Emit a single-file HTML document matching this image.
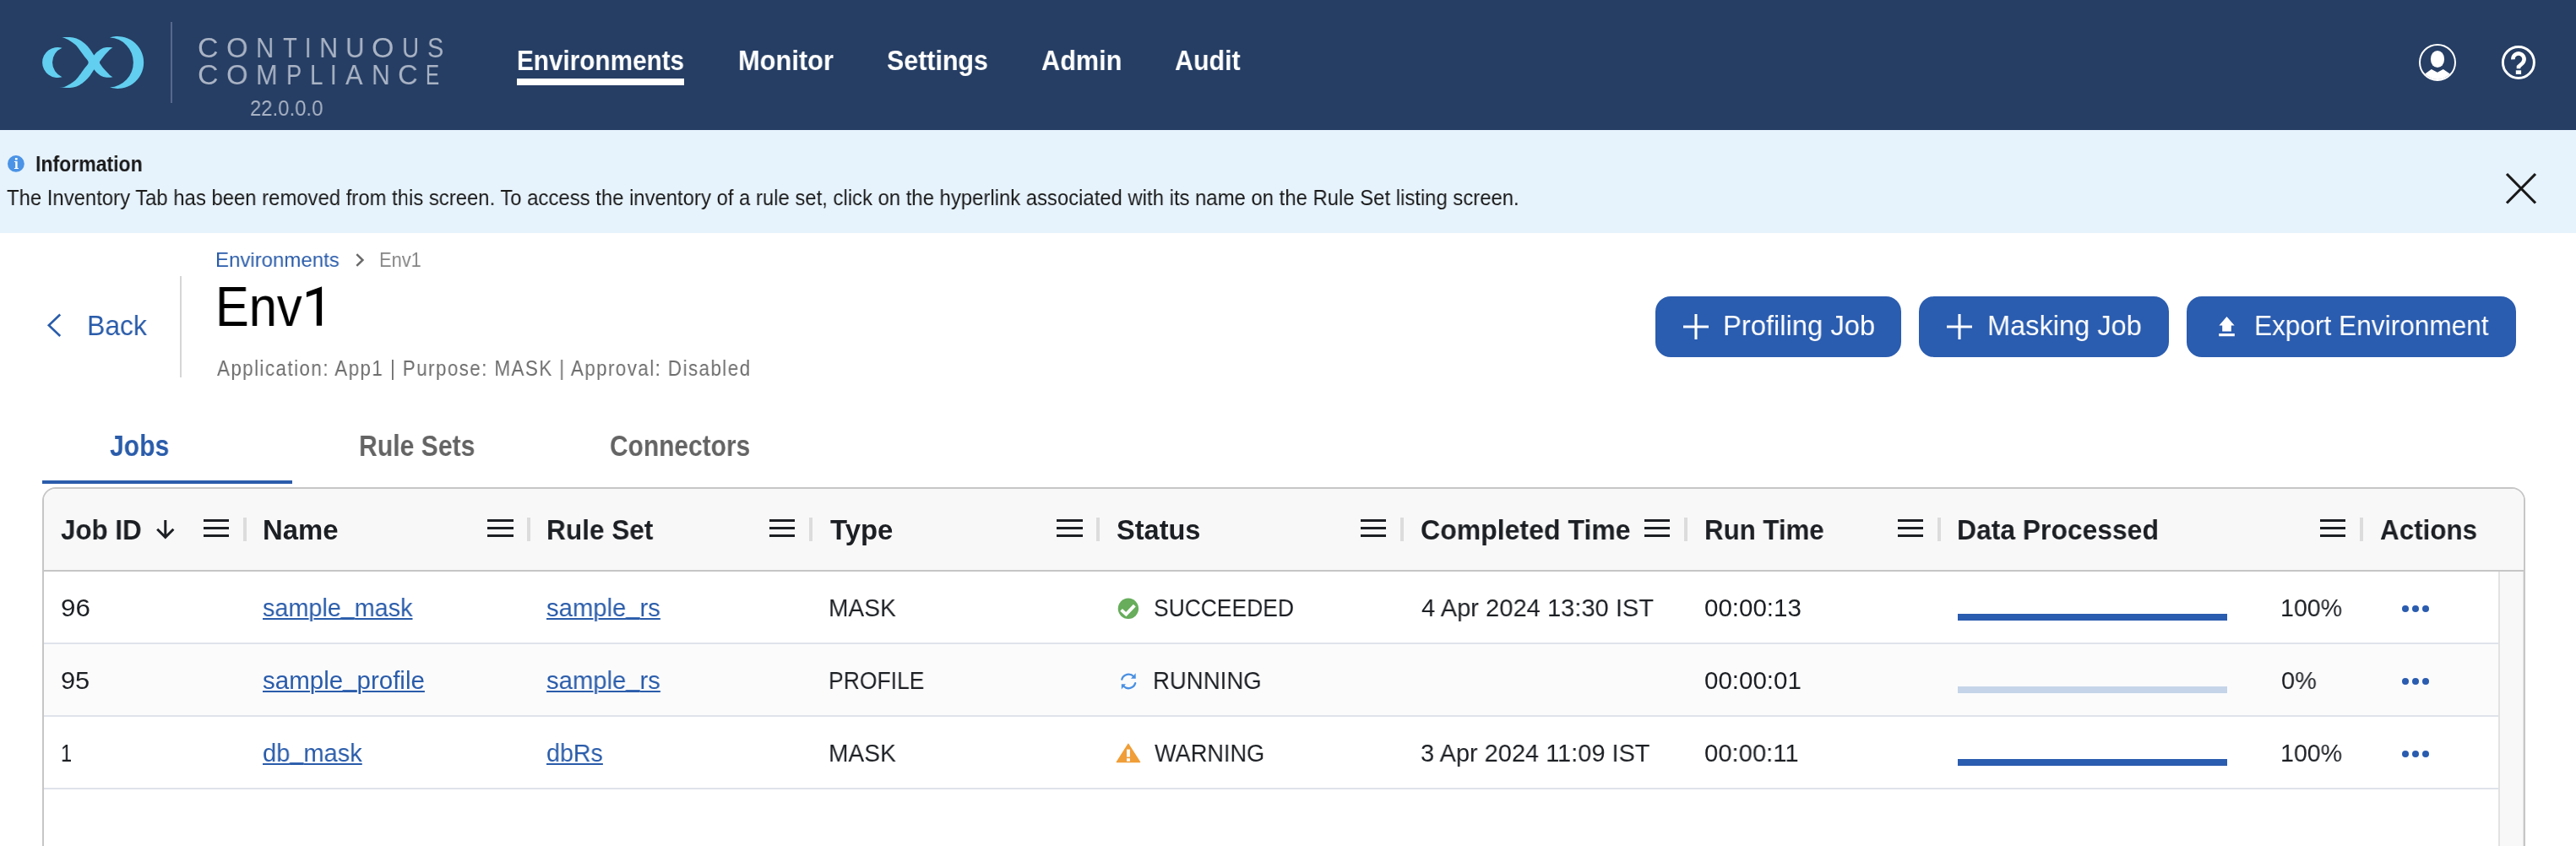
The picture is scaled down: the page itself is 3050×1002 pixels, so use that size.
<!DOCTYPE html>
<html><head><meta charset="utf-8"><title>Env1</title>
<style>
html,body{margin:0;padding:0;width:3050px;height:1002px;overflow:hidden;background:#fff}
body{position:relative;font-family:"Liberation Sans",sans-serif}
.r{position:absolute;box-sizing:border-box}
.t{position:absolute;white-space:pre;transform-origin:0 0;will-change:transform}
svg{position:absolute;left:0;top:0}
</style></head><body>
<div class="r" style="left:0.00px;top:0.00px;width:3050.00px;height:154.00px;background:#263e64;"></div>
<div class="r" style="left:202.00px;top:26.00px;width:2.00px;height:96.00px;background:#56688a;"></div>
<div class="r" style="left:612.00px;top:93.00px;width:198.00px;height:8.00px;background:#ffffff;"></div>
<div class="r" style="left:0.00px;top:154.00px;width:3050.00px;height:122.00px;background:#e6f2fc;"></div>
<div class="r" style="left:213.00px;top:327.00px;width:2.00px;height:120.00px;background:#d6d6d6;"></div>
<div class="r" style="left:1960.00px;top:351.00px;width:291.00px;height:72.00px;background:#2a5caf;border-radius:18px"></div>
<div class="r" style="left:2272.00px;top:351.00px;width:296.00px;height:72.00px;background:#2a5caf;border-radius:18px"></div>
<div class="r" style="left:2589.00px;top:351.00px;width:390.00px;height:72.00px;background:#2a5caf;border-radius:18px"></div>
<div class="r" style="left:50.00px;top:569.00px;width:296.00px;height:4.00px;background:#2a5caa;"></div>
<div class="r" style="left:50px;top:577px;width:2940px;height:600px;border:2px solid #c6c6c6;border-radius:16px;background:#fff"></div>
<div class="r" style="left:52px;top:579px;width:2936px;height:96px;background:#f8f8f8;border-radius:14px 14px 0 0"></div>
<div class="r" style="left:52.00px;top:675.00px;width:2936.00px;height:2.00px;background:#c6c6c6;"></div>
<div class="r" style="left:52.00px;top:763.00px;width:2906.00px;height:84.00px;background:#fbfbfc;"></div>
<div class="r" style="left:52.00px;top:761.00px;width:2906.00px;height:2.00px;background:#dfe3ea;"></div>
<div class="r" style="left:52.00px;top:847.00px;width:2906.00px;height:2.00px;background:#dfe3ea;"></div>
<div class="r" style="left:52.00px;top:933.00px;width:2906.00px;height:2.00px;background:#dfe3ea;"></div>
<div class="r" style="left:2958.00px;top:677.00px;width:30.00px;height:325.00px;background:#f8f8f8;"></div>
<div class="r" style="left:2958.00px;top:677.00px;width:2.00px;height:325.00px;background:#e2e2e2;"></div>
<div class="r" style="left:2986.50px;top:677.00px;width:1.50px;height:325.00px;background:#e4e4e4;"></div>
<div class="r" style="left:240.70px;top:615.00px;width:30.50px;height:3.00px;background:#1c1f23;"></div>
<div class="r" style="left:240.70px;top:624.00px;width:30.50px;height:3.00px;background:#1c1f23;"></div>
<div class="r" style="left:240.70px;top:633.00px;width:30.50px;height:3.00px;background:#1c1f23;"></div>
<div class="r" style="left:288.00px;top:613.00px;width:4.00px;height:28.00px;background:#dcdcdc;"></div>
<div class="r" style="left:577.20px;top:615.00px;width:30.50px;height:3.00px;background:#1c1f23;"></div>
<div class="r" style="left:577.20px;top:624.00px;width:30.50px;height:3.00px;background:#1c1f23;"></div>
<div class="r" style="left:577.20px;top:633.00px;width:30.50px;height:3.00px;background:#1c1f23;"></div>
<div class="r" style="left:624.00px;top:613.00px;width:4.00px;height:28.00px;background:#dcdcdc;"></div>
<div class="r" style="left:910.90px;top:615.00px;width:30.50px;height:3.00px;background:#1c1f23;"></div>
<div class="r" style="left:910.90px;top:624.00px;width:30.50px;height:3.00px;background:#1c1f23;"></div>
<div class="r" style="left:910.90px;top:633.00px;width:30.50px;height:3.00px;background:#1c1f23;"></div>
<div class="r" style="left:957.60px;top:613.00px;width:4.00px;height:28.00px;background:#dcdcdc;"></div>
<div class="r" style="left:1251.00px;top:615.00px;width:30.50px;height:3.00px;background:#1c1f23;"></div>
<div class="r" style="left:1251.00px;top:624.00px;width:30.50px;height:3.00px;background:#1c1f23;"></div>
<div class="r" style="left:1251.00px;top:633.00px;width:30.50px;height:3.00px;background:#1c1f23;"></div>
<div class="r" style="left:1298.00px;top:613.00px;width:4.00px;height:28.00px;background:#dcdcdc;"></div>
<div class="r" style="left:1610.70px;top:615.00px;width:30.50px;height:3.00px;background:#1c1f23;"></div>
<div class="r" style="left:1610.70px;top:624.00px;width:30.50px;height:3.00px;background:#1c1f23;"></div>
<div class="r" style="left:1610.70px;top:633.00px;width:30.50px;height:3.00px;background:#1c1f23;"></div>
<div class="r" style="left:1658.00px;top:613.00px;width:4.00px;height:28.00px;background:#dcdcdc;"></div>
<div class="r" style="left:1946.70px;top:615.00px;width:30.50px;height:3.00px;background:#1c1f23;"></div>
<div class="r" style="left:1946.70px;top:624.00px;width:30.50px;height:3.00px;background:#1c1f23;"></div>
<div class="r" style="left:1946.70px;top:633.00px;width:30.50px;height:3.00px;background:#1c1f23;"></div>
<div class="r" style="left:1994.00px;top:613.00px;width:4.00px;height:28.00px;background:#dcdcdc;"></div>
<div class="r" style="left:2246.90px;top:615.00px;width:30.50px;height:3.00px;background:#1c1f23;"></div>
<div class="r" style="left:2246.90px;top:624.00px;width:30.50px;height:3.00px;background:#1c1f23;"></div>
<div class="r" style="left:2246.90px;top:633.00px;width:30.50px;height:3.00px;background:#1c1f23;"></div>
<div class="r" style="left:2294.00px;top:613.00px;width:4.00px;height:28.00px;background:#dcdcdc;"></div>
<div class="r" style="left:2746.90px;top:615.00px;width:30.50px;height:3.00px;background:#1c1f23;"></div>
<div class="r" style="left:2746.90px;top:624.00px;width:30.50px;height:3.00px;background:#1c1f23;"></div>
<div class="r" style="left:2746.90px;top:633.00px;width:30.50px;height:3.00px;background:#1c1f23;"></div>
<div class="r" style="left:2794.00px;top:613.00px;width:4.00px;height:28.00px;background:#dcdcdc;"></div>
<div class="r" style="left:2318.00px;top:727.00px;width:319.00px;height:8.00px;background:#2a5caf;"></div>
<div class="r" style="left:2318.00px;top:813.00px;width:319.00px;height:8.00px;background:#c5d4e8;"></div>
<div class="r" style="left:2318.00px;top:899.00px;width:319.00px;height:8.00px;background:#2a5caf;"></div>
<div class="r" style="left:2843.8px;top:716.8px;width:8.4px;height:8.4px;border-radius:50%;background:#2a5caf"></div>
<div class="r" style="left:2855.8px;top:716.8px;width:8.4px;height:8.4px;border-radius:50%;background:#2a5caf"></div>
<div class="r" style="left:2867.8px;top:716.8px;width:8.4px;height:8.4px;border-radius:50%;background:#2a5caf"></div>
<div class="r" style="left:2843.8px;top:802.8px;width:8.4px;height:8.4px;border-radius:50%;background:#2a5caf"></div>
<div class="r" style="left:2855.8px;top:802.8px;width:8.4px;height:8.4px;border-radius:50%;background:#2a5caf"></div>
<div class="r" style="left:2867.8px;top:802.8px;width:8.4px;height:8.4px;border-radius:50%;background:#2a5caf"></div>
<div class="r" style="left:2843.8px;top:888.8px;width:8.4px;height:8.4px;border-radius:50%;background:#2a5caf"></div>
<div class="r" style="left:2855.8px;top:888.8px;width:8.4px;height:8.4px;border-radius:50%;background:#2a5caf"></div>
<div class="r" style="left:2867.8px;top:888.8px;width:8.4px;height:8.4px;border-radius:50%;background:#2a5caf"></div>
<svg width="3050" height="1002" viewBox="0 0 3050 1002"><path d="M69.0 44.3 C70.58 44.25 75.57 43.97 78.50 44.00 C81.43 44.03 83.98 43.97 86.60 44.50 C89.22 45.03 91.82 45.93 94.20 47.20 C96.58 48.47 98.88 50.30 100.90 52.10 C102.92 53.90 104.55 55.75 106.30 58.00 C108.05 60.25 110.55 64.33 111.40 65.60 C111.98 64.93 113.48 62.88 114.90 61.60 C116.32 60.32 118.25 58.78 119.90 57.90 C121.55 57.02 123.15 56.60 124.80 56.30 C126.45 56.00 128.33 56.05 129.80 56.10 C131.27 56.15 132.97 56.52 133.60 56.60 C133.07 56.93 131.58 57.60 130.40 58.60 C129.22 59.60 127.70 61.33 126.50 62.60 C125.30 63.87 124.30 64.88 123.20 66.20 C122.10 67.52 120.78 69.21 119.90 70.50 C119.02 71.79 117.90 72.80 117.90 73.95 C117.90 75.10 119.02 76.11 119.90 77.40 C120.78 78.69 122.10 80.38 123.20 81.70 C124.30 83.02 125.30 84.03 126.50 85.30 C127.70 86.57 129.22 88.30 130.40 89.30 C131.58 90.30 133.07 90.97 133.60 91.30 C132.97 91.38 131.27 91.75 129.80 91.80 C128.33 91.85 126.45 91.90 124.80 91.60 C123.15 91.30 121.55 90.88 119.90 90.00 C118.25 89.12 116.32 87.58 114.90 86.30 C113.48 85.02 111.98 82.97 111.40 82.30 C110.55 83.57 108.05 87.65 106.30 89.90 C104.55 92.15 102.92 94.00 100.90 95.80 C98.88 97.60 96.58 99.43 94.20 100.70 C91.82 101.97 89.22 102.87 86.60 103.40 C83.98 103.93 81.43 103.87 78.50 103.90 C75.57 103.93 70.58 103.65 69.00 103.60 C69.98 103.55 72.57 104.00 74.90 103.30 C77.23 102.60 80.60 100.80 83.00 99.40 C85.40 98.00 87.43 96.63 89.30 94.90 C91.17 93.17 92.42 91.33 94.20 89.00 C95.98 86.67 98.25 83.41 100.00 80.90 C101.75 78.39 104.70 76.27 104.70 73.95 C104.70 71.63 101.75 69.51 100.00 67.00 C98.25 64.49 95.98 61.23 94.20 58.90 C92.42 56.57 91.17 54.73 89.30 53.00 C87.43 51.27 85.40 49.90 83.00 48.50 C80.60 47.10 77.23 45.30 74.90 44.60 C72.57 43.90 69.98 44.35 69.00 44.30 Z" fill="#62cef0"/>
<path d="M73.5 56.72 A18.04 18.04 0 1 0 73.5 91.17 A18.67 18.67 0 0 1 73.5 56.72 Z" fill="#62cef0"/>
<path d="M130 44.4 A30.95 30.95 0 1 1 130 103.5 A29.6 29.6 0 0 0 130 44.4 Z" fill="#62cef0"/>
<circle cx="2886" cy="73.9" r="21" fill="none" stroke="#fff" stroke-width="2"/>
<ellipse cx="2886" cy="70" rx="8.1" ry="10.1" fill="#fff"/>
<path d="M2871.16 87.6 L2878.8 81.9 L2885.9 85.8 L2892.8 81.9 L2900.84 87.6 A20.2 20.2 0 0 1 2871.16 87.6 Z" fill="#fff"/>
<circle cx="2981.9" cy="73.9" r="18.5" fill="none" stroke="#fff" stroke-width="3"/>
<path d="M2975.4 70.3 A6.6 6.6 0 1 1 2986.8 74.6 L2982 79 L2982 81.2" fill="none" stroke="#fff" stroke-width="4.6"/>
<rect x="2978.8" y="83.3" width="6.3" height="4.6" fill="#fff"/>
<path d="M2968 206 L3002 240.5 M3002 206 L2968 240.5" stroke="#1a1a1a" stroke-width="3.2"/>
<circle cx="18.9" cy="193.9" r="9.9" fill="#4a93e6"/>
<rect x="17.9" y="187" width="2.7" height="2.6" fill="#fff"/><path d="M16.9 191.1 H20.6 V198.9 H21.9 V200 H16.9 V198.9 H18.2 V192.1 H16.9 Z" fill="#fff"/>
<path d="M362.9 346.1 L380.7 339.5 L381.1 339.5 L381.1 385.8 L374.8 385.8 L374.8 347.8 L362.9 351.9 Z" fill="#000"/>
<path d="M422.3 301.2 L429.4 308 L422.3 314.8" fill="none" stroke="#6a6a6a" stroke-width="2.5"/>
<path d="M71.2 372.5 L57.8 385.2 L71.2 398" fill="none" stroke="#2a5caa" stroke-width="2.6"/>
<path d="M2008.0 372 V402 M1993.0 387 H2023.0" stroke="#fff" stroke-width="3.1"/>
<path d="M2320.0 372 V402 M2305.0 387 H2335.0" stroke="#fff" stroke-width="3.1"/>
<path d="M2627.4 385.6 L2636.5 375 L2645.6 385.6 Z M2631.2 385 H2641.8 V392.6 H2631.2 Z M2627.2 395 H2645.8 V398.2 H2627.2 Z" fill="#fff"/>
<path d="M195.8 616 V636 M186.2 626.8 L195.8 636.4 L205.4 626.8" fill="none" stroke="#1c1f23" stroke-width="3"/>
<circle cx="1335.9" cy="720.8" r="12.2" fill="#67ad5b"/><path d="M1327.6 722.4 L1333.3 727.6 L1343.3 717.2" fill="none" stroke="#fff" stroke-width="3.9"/>
<path d="M1328.3 804.6 A8.4 8.4 0 0 1 1342.3 801.2 M1344.2 809.2 A8.4 8.4 0 0 1 1330.3 812.8" fill="none" stroke="#4a90e2" stroke-width="2.3" stroke-linecap="round"/>
<path d="M1339.0 803.8 L1344.6 797.3 L1344.8 803.8 Z M1327.8 810.2 L1332.9 810.2 L1327.8 816.6 Z" fill="#4a90e2"/>
<path d="M1335.9 881.3 L1349.6 902.6 L1322.3 902.6 Z" fill="#f09e38" stroke="#f09e38" stroke-width="1.4" stroke-linejoin="round"/>
<rect x="1334" y="887.6" width="3.9" height="8.9" fill="#fff"/><rect x="1334" y="898.2" width="3.9" height="3.5" fill="#fff"/></svg>
<div class="t" style="left:234.30px;top:39.30px;font-size:34.01px;line-height:34.01px;font-weight:400;color:#a9b3c4;transform:scaleX(0.9955)">C</div>
<div class="t" style="left:267.73px;top:39.30px;font-size:34.01px;line-height:34.01px;font-weight:400;color:#a9b3c4;transform:scaleX(0.9667)">O</div>
<div class="t" style="left:302.96px;top:39.30px;font-size:34.01px;line-height:34.01px;font-weight:400;color:#a9b3c4;transform:scaleX(0.8700)">N</div>
<div class="t" style="left:334.60px;top:39.30px;font-size:34.01px;line-height:34.01px;font-weight:400;color:#a9b3c4;transform:scaleX(0.8100)">T</div>
<div class="t" style="left:360.98px;top:39.30px;font-size:34.01px;line-height:34.01px;font-weight:400;color:#a9b3c4;transform:scaleX(0.7750)">I</div>
<div class="t" style="left:378.20px;top:39.30px;font-size:34.01px;line-height:34.01px;font-weight:400;color:#a9b3c4;transform:scaleX(0.9000)">N</div>
<div class="t" style="left:408.96px;top:39.30px;font-size:34.01px;line-height:34.01px;font-weight:400;color:#a9b3c4;transform:scaleX(0.9200)">U</div>
<div class="t" style="left:440.01px;top:39.30px;font-size:34.01px;line-height:34.01px;font-weight:400;color:#a9b3c4;transform:scaleX(0.9875)">O</div>
<div class="t" style="left:475.76px;top:39.30px;font-size:34.01px;line-height:34.01px;font-weight:400;color:#a9b3c4;transform:scaleX(0.8200)">U</div>
<div class="t" style="left:505.51px;top:39.30px;font-size:34.01px;line-height:34.01px;font-weight:400;color:#a9b3c4;transform:scaleX(0.8474)">S</div>
<div class="t" style="left:234.30px;top:71.20px;font-size:34.01px;line-height:34.01px;font-weight:400;color:#a9b3c4;transform:scaleX(0.9955)">C</div>
<div class="t" style="left:267.73px;top:71.20px;font-size:34.01px;line-height:34.01px;font-weight:400;color:#a9b3c4;transform:scaleX(0.9667)">O</div>
<div class="t" style="left:302.89px;top:71.20px;font-size:34.01px;line-height:34.01px;font-weight:400;color:#a9b3c4;transform:scaleX(0.9042)">M</div>
<div class="t" style="left:338.70px;top:71.20px;font-size:34.01px;line-height:34.01px;font-weight:400;color:#a9b3c4;transform:scaleX(0.8000)">P</div>
<div class="t" style="left:367.07px;top:71.20px;font-size:34.01px;line-height:34.01px;font-weight:400;color:#a9b3c4;transform:scaleX(0.8125)">L</div>
<div class="t" style="left:391.40px;top:71.20px;font-size:34.01px;line-height:34.01px;font-weight:400;color:#a9b3c4;transform:scaleX(0.8000)">I</div>
<div class="t" style="left:409.40px;top:71.20px;font-size:34.01px;line-height:34.01px;font-weight:400;color:#a9b3c4;transform:scaleX(0.9000)">A</div>
<div class="t" style="left:439.53px;top:71.20px;font-size:34.01px;line-height:34.01px;font-weight:400;color:#a9b3c4;transform:scaleX(0.8850)">N</div>
<div class="t" style="left:470.84px;top:71.20px;font-size:34.01px;line-height:34.01px;font-weight:400;color:#a9b3c4;transform:scaleX(0.9636)">C</div>
<div class="t" style="left:504.38px;top:71.20px;font-size:34.01px;line-height:34.01px;font-weight:400;color:#a9b3c4;transform:scaleX(0.7100)">E</div>
<div class="t" style="left:295.66px;top:116.10px;font-size:25.40px;line-height:25.40px;font-weight:400;color:#a9b3c4;transform:scaleX(0.9411)">22.0.0.0</div>
<div class="t" style="left:611.92px;top:55.30px;font-size:33.43px;line-height:33.43px;font-weight:700;color:#ffffff;transform:scaleX(0.8886)">Environments</div>
<div class="t" style="left:873.76px;top:55.30px;font-size:33.43px;line-height:33.43px;font-weight:700;color:#ffffff;transform:scaleX(0.9217)">Monitor</div>
<div class="t" style="left:1050.19px;top:55.30px;font-size:33.43px;line-height:33.43px;font-weight:700;color:#ffffff;transform:scaleX(0.9092)">Settings</div>
<div class="t" style="left:1233.28px;top:55.30px;font-size:33.43px;line-height:33.43px;font-weight:700;color:#ffffff;transform:scaleX(0.9178)">Admin</div>
<div class="t" style="left:1390.89px;top:55.30px;font-size:33.43px;line-height:33.43px;font-weight:700;color:#ffffff;transform:scaleX(0.9095)">Audit</div>
<div class="t" style="left:41.81px;top:182.00px;font-size:25.87px;line-height:25.87px;font-weight:700;color:#1a1a1a;transform:scaleX(0.8907)">Information</div>
<div class="t" style="left:7.80px;top:221.70px;font-size:25.73px;line-height:25.73px;font-weight:400;color:#1a1a1a;transform:scaleX(0.9283)">The Inventory Tab has been removed from this screen. To access the inventory of a rule set, click on the hyperlink associated with its name on the Rule Set listing screen.</div>
<div class="t" style="left:254.62px;top:295.70px;font-size:24.27px;line-height:24.27px;font-weight:400;color:#2a5caa;transform:scaleX(0.9890)">Environments</div>
<div class="t" style="left:448.80px;top:295.70px;font-size:24.27px;line-height:24.27px;font-weight:400;color:#858585;transform:scaleX(0.9000)">Env1</div>
<div class="t" style="left:254.56px;top:329.40px;font-size:67.15px;line-height:67.15px;font-weight:400;color:#000000;transform:scaleX(0.8882)">Env</div>
<div class="t" style="left:102.62px;top:368.00px;font-size:34.01px;line-height:34.01px;font-weight:400;color:#2a5caa;transform:scaleX(0.9384)">Back</div>
<div class="t" style="left:256.60px;top:425.00px;font-size:24.85px;line-height:24.85px;font-weight:400;color:#6e6e6e;letter-spacing:1.60px;transform:scaleX(0.8999)">Application: App1 | Purpose: MASK | Approval: Disabled</div>
<div class="t" style="left:2039.66px;top:369.40px;font-size:33.72px;line-height:33.72px;font-weight:400;color:#ffffff;transform:scaleX(0.9709)">Profiling Job</div>
<div class="t" style="left:2352.77px;top:369.40px;font-size:33.72px;line-height:33.72px;font-weight:400;color:#ffffff;transform:scaleX(0.9656)">Masking Job</div>
<div class="t" style="left:2668.53px;top:369.40px;font-size:33.72px;line-height:33.72px;font-weight:400;color:#ffffff;transform:scaleX(0.9374)">Export Environment</div>
<div class="t" style="left:129.92px;top:511.10px;font-size:34.30px;line-height:34.30px;font-weight:700;color:#2a5caa;transform:scaleX(0.8782)">Jobs</div>
<div class="t" style="left:424.74px;top:511.10px;font-size:34.30px;line-height:34.30px;font-weight:700;color:#646464;transform:scaleX(0.8791)">Rule Sets</div>
<div class="t" style="left:722.13px;top:511.10px;font-size:34.30px;line-height:34.30px;font-weight:700;color:#646464;transform:scaleX(0.8718)">Connectors</div>
<div class="t" style="left:71.93px;top:611.90px;font-size:32.41px;line-height:32.41px;font-weight:700;color:#1c1f23;transform:scaleX(0.9670)">Job ID</div>
<div class="t" style="left:310.97px;top:611.90px;font-size:32.41px;line-height:32.41px;font-weight:700;color:#1c1f23;transform:scaleX(1.0141)">Name</div>
<div class="t" style="left:647.05px;top:611.90px;font-size:32.41px;line-height:32.41px;font-weight:700;color:#1c1f23;transform:scaleX(0.9748)">Rule Set</div>
<div class="t" style="left:983.00px;top:611.90px;font-size:32.41px;line-height:32.41px;font-weight:700;color:#1c1f23;transform:scaleX(1.0139)">Type</div>
<div class="t" style="left:1321.80px;top:611.90px;font-size:32.41px;line-height:32.41px;font-weight:700;color:#1c1f23;transform:scaleX(1.0041)">Status</div>
<div class="t" style="left:1682.01px;top:611.90px;font-size:32.41px;line-height:32.41px;font-weight:700;color:#1c1f23;transform:scaleX(0.9880)">Completed Time</div>
<div class="t" style="left:2017.77px;top:611.90px;font-size:32.41px;line-height:32.41px;font-weight:700;color:#1c1f23;transform:scaleX(0.9632)">Run Time</div>
<div class="t" style="left:2317.04px;top:611.90px;font-size:32.41px;line-height:32.41px;font-weight:700;color:#1c1f23;transform:scaleX(0.9821)">Data Processed</div>
<div class="t" style="left:2818.03px;top:611.90px;font-size:32.41px;line-height:32.41px;font-weight:700;color:#1c1f23;transform:scaleX(0.9684)">Actions</div>
<div class="t" style="left:72.04px;top:705.20px;font-size:29.50px;line-height:29.50px;font-weight:400;color:#1c1f23;transform:scaleX(1.0613)">96</div>
<div class="t" style="left:311.22px;top:705.20px;font-size:29.50px;line-height:29.50px;font-weight:400;color:#2a5caa;transform:scaleX(0.9751);text-decoration:underline;text-decoration-skip-ink:auto;text-decoration-thickness:2px;text-underline-offset:1.6px">sample<span style="position:relative;top:-3.4px">_</span>mask</div>
<div class="t" style="left:647.01px;top:705.20px;font-size:29.50px;line-height:29.50px;font-weight:400;color:#2a5caa;transform:scaleX(0.9910);text-decoration:underline;text-decoration-skip-ink:auto;text-decoration-thickness:2px;text-underline-offset:1.6px">sample<span style="position:relative;top:-3.4px">_</span>rs</div>
<div class="t" style="left:980.59px;top:705.20px;font-size:29.50px;line-height:29.50px;font-weight:400;color:#1c1f23;transform:scaleX(0.9543)">MASK</div>
<div class="t" style="left:1365.90px;top:705.20px;font-size:29.50px;line-height:29.50px;font-weight:400;color:#1c1f23;transform:scaleX(0.8956)">SUCCEEDED</div>
<div class="t" style="left:1682.60px;top:705.20px;font-size:29.50px;line-height:29.50px;font-weight:400;color:#1c1f23;transform:scaleX(0.9867)">4 Apr 2024 13:30 IST</div>
<div class="t" style="left:2018.00px;top:705.20px;font-size:29.50px;line-height:29.50px;font-weight:400;color:#1c1f23">00:00:13</div>
<div class="t" style="left:2700.36px;top:705.20px;font-size:29.50px;line-height:29.50px;font-weight:400;color:#1c1f23;transform:scaleX(0.9685)">100%</div>
<div class="t" style="left:72.06px;top:791.20px;font-size:29.50px;line-height:29.50px;font-weight:400;color:#1c1f23;transform:scaleX(1.0419)">95</div>
<div class="t" style="left:311.20px;top:791.20px;font-size:29.50px;line-height:29.50px;font-weight:400;color:#2a5caa;text-decoration:underline;text-decoration-skip-ink:auto;text-decoration-thickness:2px;text-underline-offset:1.6px">sample<span style="position:relative;top:-3.4px">_</span>profile</div>
<div class="t" style="left:647.01px;top:791.20px;font-size:29.50px;line-height:29.50px;font-weight:400;color:#2a5caa;transform:scaleX(0.9910);text-decoration:underline;text-decoration-skip-ink:auto;text-decoration-thickness:2px;text-underline-offset:1.6px">sample<span style="position:relative;top:-3.4px">_</span>rs</div>
<div class="t" style="left:980.70px;top:791.20px;font-size:29.50px;line-height:29.50px;font-weight:400;color:#1c1f23;transform:scaleX(0.8984)">PROFILE</div>
<div class="t" style="left:1364.93px;top:791.20px;font-size:29.50px;line-height:29.50px;font-weight:400;color:#1c1f23;transform:scaleX(0.9343)">RUNNING</div>
<div class="t" style="left:2018.00px;top:791.20px;font-size:29.50px;line-height:29.50px;font-weight:400;color:#1c1f23">00:00:01</div>
<div class="t" style="left:2701.32px;top:791.20px;font-size:29.50px;line-height:29.50px;font-weight:400;color:#1c1f23;transform:scaleX(0.9805)">0%</div>
<div class="t" style="left:71.52px;top:877.20px;font-size:29.50px;line-height:29.50px;font-weight:400;color:#1c1f23;transform:scaleX(0.7923)">1</div>
<div class="t" style="left:311.22px;top:877.20px;font-size:29.50px;line-height:29.50px;font-weight:400;color:#2a5caa;transform:scaleX(0.9832);text-decoration:underline;text-decoration-skip-ink:auto;text-decoration-thickness:2px;text-underline-offset:1.6px">db<span style="position:relative;top:-3.4px">_</span>mask</div>
<div class="t" style="left:647.03px;top:877.20px;font-size:29.50px;line-height:29.50px;font-weight:400;color:#2a5caa;transform:scaleX(0.9716);text-decoration:underline;text-decoration-skip-ink:auto;text-decoration-thickness:2px;text-underline-offset:1.6px">dbRs</div>
<div class="t" style="left:980.59px;top:877.20px;font-size:29.50px;line-height:29.50px;font-weight:400;color:#1c1f23;transform:scaleX(0.9543)">MASK</div>
<div class="t" style="left:1366.80px;top:877.20px;font-size:29.50px;line-height:29.50px;font-weight:400;color:#1c1f23;transform:scaleX(0.9200)">WARNING</div>
<div class="t" style="left:1681.62px;top:877.20px;font-size:29.50px;line-height:29.50px;font-weight:400;color:#1c1f23;transform:scaleX(0.9815)">3 Apr 2024 11:09 IST</div>
<div class="t" style="left:2018.01px;top:877.20px;font-size:29.50px;line-height:29.50px;font-weight:400;color:#1c1f23;transform:scaleX(0.9909)">00:00:11</div>
<div class="t" style="left:2700.36px;top:877.20px;font-size:29.50px;line-height:29.50px;font-weight:400;color:#1c1f23;transform:scaleX(0.9685)">100%</div>
</body></html>
